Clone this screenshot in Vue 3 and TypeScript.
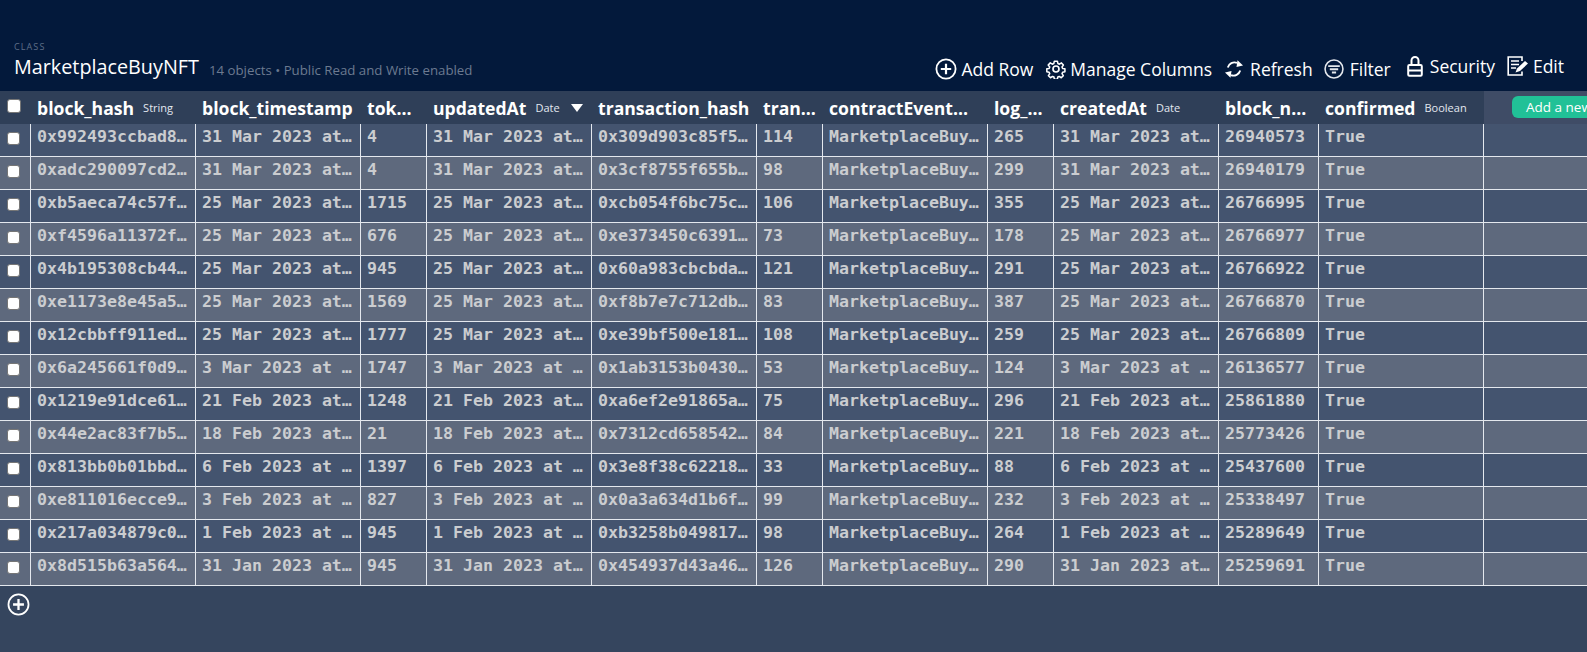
<script setup lang="ts">
interface Column { name: string; type?: string; width: number; sorted?: boolean }

const columns: Column[] = [
  { name: 'block_hash', type: 'String', width: 165 },
  { name: 'block_timestamp', width: 165 },
  { name: 'tok…', width: 66 },
  { name: 'updatedAt', type: 'Date', width: 165, sorted: true },
  { name: 'transaction_hash', width: 165 },
  { name: 'tran…', width: 66 },
  { name: 'contractEvent…', width: 165 },
  { name: 'log_…', width: 66 },
  { name: 'createdAt', type: 'Date', width: 165 },
  { name: 'block_n…', width: 100 },
  { name: 'confirmed', type: 'Boolean', width: 165 },
]

const M = 'MarketplaceBuy…'
const rows: string[][] = [
  ['0x992493ccbad8…', '31 Mar 2023 at…', '4', '31 Mar 2023 at…', '0x309d903c85f5…', '114', M, '265', '31 Mar 2023 at…', '26940573', 'True'],
  ['0xadc290097cd2…', '31 Mar 2023 at…', '4', '31 Mar 2023 at…', '0x3cf8755f655b…', '98', M, '299', '31 Mar 2023 at…', '26940179', 'True'],
  ['0xb5aeca74c57f…', '25 Mar 2023 at…', '1715', '25 Mar 2023 at…', '0xcb054f6bc75c…', '106', M, '355', '25 Mar 2023 at…', '26766995', 'True'],
  ['0xf4596a11372f…', '25 Mar 2023 at…', '676', '25 Mar 2023 at…', '0xe373450c6391…', '73', M, '178', '25 Mar 2023 at…', '26766977', 'True'],
  ['0x4b195308cb44…', '25 Mar 2023 at…', '945', '25 Mar 2023 at…', '0x60a983cbcbda…', '121', M, '291', '25 Mar 2023 at…', '26766922', 'True'],
  ['0xe1173e8e45a5…', '25 Mar 2023 at…', '1569', '25 Mar 2023 at…', '0xf8b7e7c712db…', '83', M, '387', '25 Mar 2023 at…', '26766870', 'True'],
  ['0x12cbbff911ed…', '25 Mar 2023 at…', '1777', '25 Mar 2023 at…', '0xe39bf500e181…', '108', M, '259', '25 Mar 2023 at…', '26766809', 'True'],
  ['0x6a245661f0d9…', '3 Mar 2023 at …', '1747', '3 Mar 2023 at …', '0x1ab3153b0430…', '53', M, '124', '3 Mar 2023 at …', '26136577', 'True'],
  ['0x1219e91dce61…', '21 Feb 2023 at…', '1248', '21 Feb 2023 at…', '0xa6ef2e91865a…', '75', M, '296', '21 Feb 2023 at…', '25861880', 'True'],
  ['0x44e2ac83f7b5…', '18 Feb 2023 at…', '21', '18 Feb 2023 at…', '0x7312cd658542…', '84', M, '221', '18 Feb 2023 at…', '25773426', 'True'],
  ['0x813bb0b01bbd…', '6 Feb 2023 at …', '1397', '6 Feb 2023 at …', '0x3e8f38c62218…', '33', M, '88', '6 Feb 2023 at …', '25437600', 'True'],
  ['0xe811016ecce9…', '3 Feb 2023 at …', '827', '3 Feb 2023 at …', '0x0a3a634d1b6f…', '99', M, '232', '3 Feb 2023 at …', '25338497', 'True'],
  ['0x217a034879c0…', '1 Feb 2023 at …', '945', '1 Feb 2023 at …', '0xb3258b049817…', '98', M, '264', '1 Feb 2023 at …', '25289649', 'True'],
  ['0x8d515b63a564…', '31 Jan 2023 at…', '945', '31 Jan 2023 at…', '0x454937d43a46…', '126', M, '290', '31 Jan 2023 at…', '25259691', 'True'],
]
</script>

<template>
  <div class="page">
    <header class="toolbar">
      <div class="heading">
        <div class="eyebrow">CLASS</div>
        <div class="title-line">
          <span class="title">MarketplaceBuyNFT</span>
          <span class="subtitle">14 objects • Public Read and Write enabled</span>
        </div>
      </div>
      <nav class="actions">
        <a class="action tight">
          <svg width="22" height="22" viewBox="0 0 22 22" fill="none" stroke="#fff">
            <circle cx="11" cy="11" r="9.6" stroke-width="1.8" />
            <path d="M11 5.800v10.400M5.800 11h10.400" stroke-width="2.200" />
          </svg>
          <span>Add Row</span>
        </a>
        <a class="action tight gear">
          <svg width="20" height="20" viewBox="0 0 24 24" fill="none" stroke="#fff" stroke-width="2" stroke-linejoin="round">
            <circle cx="12" cy="12" r="3.600" />
            <path d="M10 2h4l.7 3.100 1.900.8 2.700-1.700 2.500 2.900-1.800 2.500.8 1.900 3 .5v3.800l-3 .6-.8 1.900 1.700 2.600-2.700 2.700-2.600-1.700-1.900.8-.6 3h-3.800l-.6-3-1.900-.8-2.600 1.700-2.700-2.700 1.700-2.600-.8-1.900-3-.6v-3.800l3-.5.8-1.900L2 7.100l2.700-2.900 2.700 1.700 1.900-.8z" transform="translate(.8 .8) scale(.92)" />
          </svg>
          <span>Manage Columns</span>
        </a>
        <a class="action">
          <svg width="20" height="20" viewBox="0 0 20 20" fill="#fff" stroke="none">
            <path d="M3.800 8.500A7 7 0 0 1 13 3.800" fill="none" stroke="#fff" stroke-width="1.900" />
            <path d="M13.500 1.300 19 6.500l-6.500 1.500z" />
            <path d="M16.200 11.500A7 7 0 0 1 7 16.200" fill="none" stroke="#fff" stroke-width="1.900" />
            <path d="M6.500 18.700 1 13.500 7.500 12z" />
          </svg>
          <span>Refresh</span>
        </a>
        <a class="action filter">
          <svg width="20" height="20" viewBox="0 0 19 19" fill="none" stroke="#e4e7ec">
            <circle cx="9.500" cy="9.500" r="8.500" stroke-width="1.500" />
            <path d="M4 6.800h11M5.500 9.800h8M7.500 12.800h4" stroke-width="1.800" />
          </svg>
          <span>Filter</span>
        </a>
        <a class="action raised lock">
          <svg width="16" height="21" viewBox="0 0 16 21" fill="none" stroke="#fff" stroke-width="2">
            <rect x="1.200" y="9" width="13.600" height="10.800" rx="1.200" />
            <path d="M4.500 9V4.500a3.500 3.500 0 0 1 7 0V9M1.500 14.500h13" />
          </svg>
          <span>Security</span>
        </a>
        <a class="action raised tight">
          <svg width="22" height="20" viewBox="0 0 22 20" fill="none" stroke="#fff">
            <path d="M15 15.500V19H1.200V1H15v4" stroke-width="1.600" />
            <path d="M4 5h8M4 8.500h8M4 12h5" stroke-width="1.500" />
            <path d="M8.500 16.500 10 12.500 18 5l3 2.500-8 7.500z" fill="#fff" stroke="none" />
          </svg>
          <span>Edit</span>
        </a>
      </nav>
    </header>

    <div class="grid">
      <div class="head-row">
        <div class="check-cell"><span class="box"></span></div>
        <div v-for="c in columns" :key="c.name" class="head-cell" :style="{ width: c.width + 'px' }">
          <span class="col-name">{{ c.name }}</span>
          <span v-if="c.type" class="col-type">{{ c.type }}</span>
          <span v-if="c.sorted" class="sort"></span>
        </div>
        <div class="head-extra"><button class="add-new">Add a new column</button></div>
      </div>
      <div v-for="(r, i) in rows" :key="r[0]" class="row" :class="{ alt: i % 2 === 1 }">
        <div class="check-cell"><span class="box small"></span></div>
        <div v-for="(v, j) in r" :key="j" class="cell" :style="{ width: columns[j].width + 'px' }">{{ v }}</div>
        <div class="cell-fill"></div>
      </div>
      <div class="foot">
        <svg width="23" height="23" viewBox="0 0 22 22" fill="none" stroke="#fff">
          <circle cx="11" cy="11" r="9.600" stroke-width="1.700" />
          <path d="M11 5.800v10.400M5.800 11h10.400" stroke-width="2.200" />
        </svg>
      </div>
    </div>
  </div>
</template>

<style>
html, body { margin: 0; background: #35455e; }
</style>

<style scoped>
.page {
  width: 1587px;
  height: 652px;
  overflow: hidden;
  display: flex;
  flex-direction: column;
  background: #35455e;
  font-family: "Open Sans", sans-serif;
}
.toolbar {
  height: 91px;
  flex: none;
  box-sizing: border-box;
  background: #03193b;
  display: flex;
  justify-content: space-between;
  align-items: flex-end;
  padding: 0 23px 0 14px;
}
.heading { padding-bottom: 10px; }
.eyebrow {
  font-size: 9px;
  line-height: 12px;
  letter-spacing: 1.1px;
  color: #5f6f88;
}
.title-line { display: flex; align-items: flex-end; }
.title { font-size: 19.8px; line-height: 28px; color: #fff; }
.subtitle { font-size: 13.25px; line-height: 21px; color: #6c7a90; margin-left: 10px; }
.actions { display: flex; align-items: flex-end; gap: 12px; padding-bottom: 10px; }
.action {
  display: flex;
  align-items: center;
  gap: 6px;
  height: 24px;
  color: #fff;
  font-size: 17.5px;
  line-height: 24px;
  white-space: nowrap;
}
.action.tight { gap: 4px; }
.action.gear { margin-left: 1px; }
.action.filter { margin-left: -1px; }
.action.raised { margin-bottom: 3px; }
.action.lock { margin-left: 4px; gap: 7px; }
.grid { display: flex; flex-direction: column; }
.head-row, .row { display: flex; flex: none; }
.head-row { height: 33px; background: #2f3f58; }
.row { height: 33px; background: #44546f; box-sizing: border-box; border-bottom: 1px solid #e4e8ee; }
.row.alt { background: #5e697d; }
.check-cell {
  width: 31px;
  flex: none;
  box-sizing: border-box;
  display: flex;
  align-items: center;
  justify-content: center;
  padding: 0 3px 4px 0;
}
.row .check-cell { border-right: 1px solid #e4e8ee; }
.box {
  width: 12px;
  height: 12px;
  background: #fff;
  border: 1px solid #767676;
  border-radius: 3px;
}
.box.small { width: 11px; height: 11px; }
.head-cell {
  flex: none;
  box-sizing: border-box;
  padding-left: 6px;
  display: flex;
  align-items: center;
  white-space: nowrap;
  overflow: hidden;
}
.col-name { color: #fff; font-size: 17.6px; font-weight: 700; }
.col-type { color: #e3e8f0; font-size: 11px; margin-left: 9px; }
.sort {
  margin-left: 11px;
  width: 0;
  height: 0;
  border-left: 6px solid transparent;
  border-right: 6px solid transparent;
  border-top: 8px solid #fff;
}
.head-extra {
  flex: 1;
  min-width: 0;
  background: #3f4c66;
  padding: 5px 0 0 28px;
  overflow: hidden;
}
.add-new {
  display: block;
  width: 140px;
  height: 22px;
  border: 0;
  border-radius: 6px;
  background: #21c197;
  color: #fff;
  font: 13.500px/22px "Open Sans", sans-serif;
  text-align: left;
  padding: 0 0 0 14px;
  white-space: nowrap;
}
.cell {
  flex: none;
  box-sizing: border-box;
  border-right: 1px solid #e4e8ee;
  padding: 0 0 4px 6px;
  color: #cbcdd0;
  font: 700 16.6px/26px "DejaVu Sans Mono", monospace;
  white-space: nowrap;
  overflow: hidden;
}
.cell-fill { flex: 1; }
.foot { padding: 7px 0 0 7px; height: 40px; }
</style>
